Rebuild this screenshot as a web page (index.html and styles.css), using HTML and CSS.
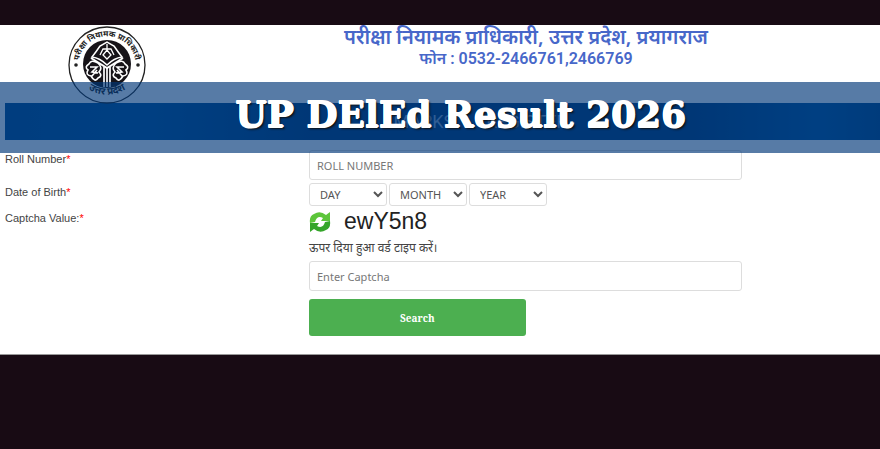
FILE: index.html
```html
<!DOCTYPE html>
<html lang="en">
<head>
    <meta charset="UTF-8">
    <meta name="viewport" content="width=device-width, initial-scale=1.0">
    <title>UP DElEd Result 2026</title>
    <link rel="stylesheet" href="styles.css">
</head>
<body>

    <div class="page">
        <header class="header">
            <svg class="logo" viewBox="0 0 80 80" aria-hidden="true">
                <defs>
                    <path id="topArc" d="M 13 49 A 28.500 28.500 0 1 1 67 49"/>
                    <path id="bottomArc" d="M 12 55 A 34 34 0 0 0 68 55"/>
                </defs>
                <circle cx="40" cy="40" r="38" fill="#fff" stroke="#222" stroke-width="1.300"/>
                <circle cx="40" cy="39" r="24" fill="#161318"/>
                <circle cx="9" cy="40" r="1.800" fill="#222"/>
                <circle cx="71" cy="40" r="1.800" fill="#222"/>
                <g fill="none" stroke="#fff">
                    <path d="M25 32 Q29 27 33 21 L40 17 L47 21 Q51 27 55 32 Q47 33 40 40 Q33 33 25 32 Z" stroke-width="1.500"/>
                    <path d="M33 30 L36 24 H44 L47 30 M36 30 L40 25 L44 30 L40 34 Z M40 19 V24" stroke-width="1.300"/>
                    <path d="M24 33 L40 43 L56 33" stroke-width="2"/>
                    <path d="M37 42 V62 M40 42 V62 M43 42 V62" stroke-width="1.700"/>
                    <path d="M31 38 Q24 34 22 39 Q17 42 21 45 Q18 50 24 51 Q28 58 31 53 Q36 51 32 47 Q36 43 31 38 M23 42 L30 42 L25 47 L31 48 M25 51 L30 45" stroke-width="1.600"/>
                    <path d="M49 38 Q56 34 58 39 Q63 42 59 45 Q62 50 56 51 Q52 58 49 53 Q44 51 48 47 Q44 43 49 38 M57 42 L50 42 L55 47 L49 48 M55 51 L50 45" stroke-width="1.600"/>
                </g>
                <text class="logo-text"><textPath href="#topArc" startOffset="50%">परीक्षा नियामक प्राधिकारी</textPath></text>
                <text class="logo-text logo-state"><textPath href="#bottomArc" startOffset="50%">उत्तर प्रदेश</textPath></text>
            </svg>
            <div class="office">
                <div>परीक्षा नियामक प्राधिकारी, उत्तर प्रदेश, प्रयागराज</div>
                <div class="phone">फोन : 0532-2466761,2466769</div>
            </div>
        </header>

        <div class="bar"><span>MARKS</span><span>REGISTER</span></div>

        <form class="form">
            <label for="roll">Roll Number<span>*</span></label>
            <input type="text" id="roll" placeholder="ROLL NUMBER">

            <label for="day">Date of Birth<span>*</span></label>
            <div class="dob">
                <select id="day"><option>DAY</option></select>
                <select aria-label="Month"><option>MONTH</option></select>
                <select aria-label="Year"><option>YEAR</option></select>
            </div>

            <label for="captcha">Captcha Value:<span>*</span></label>
            <div class="captcha">
                <div class="code">
                    <button type="button" class="refresh" aria-label="Refresh captcha">
                        <svg viewBox="0 0 22 22">
                            <path d="M1 12 Q0 5 5 3 Q11 -1 17 4 L21 1 V10 H12 L14 7 Q8 4 6 11 Z" fill="#5cc53a"/>
                            <path d="M21 10 Q22 17 17 19 Q11 23 5 18 L1 21 V12 H10 L8 15 Q14 18 16 11 Z" fill="#35a52a"/>
                        </svg>
                    </button>
                    <span>ewY5n8</span>
                </div>
                <p>ऊपर दिया हुआ वर्ड टाइप करें।</p>
                <input type="text" id="captcha" placeholder="Enter Captcha">
                <button type="submit" class="search">Search</button>
            </div>
        </form>

        <h1 class="banner">UP DElEd Result 2026</h1>
    </div>

</body>
</html>
```
FILE: styles.css
```css
* { box-sizing: border-box; }
body { margin: 0; padding-top: 25px; background: #180b14; font-family: "Liberation Sans", Arial, sans-serif; font-size: 11px; color: #444; }
.page { position: relative; background: white; padding-bottom: 18px; border-bottom: 1px solid #999; }

.header { display: flex; height: 78px; padding-left: 67px; }
.logo { width: 80px; height: 80px; flex: none; }
.logo-text { font: bold 8px "Noto Sans", sans-serif; fill: #222; text-anchor: middle; }
.logo-state { font-size: 10px; }
.office { flex: 1; padding-top: 1px; padding-left: 25px; text-align: center; color: #4767c9; font-family: "Noto Sans", "Noto Sans Devanagari", sans-serif; font-weight: 600; font-size: 20px; line-height: 22px; }
.phone { font-family: Roboto, "Noto Sans", sans-serif; font-size: 16px; }

.bar { display: flex; justify-content: center; gap: 32px; margin-left: 5px; height: 37px; padding-left: 76px; line-height: 37px; font-family: Roboto, sans-serif; font-size: 18px; color: #8ba6c9; background: linear-gradient(90deg, #004a8c, #005197 16%, #003872 36%, #003872 78%, #005197 93%, #004584); }

.form { display: grid; grid-template-columns: 304px 1fr; row-gap: 3px; padding: 10px 138px 0 5px; }
.form label { padding-top: 3px; line-height: 13px; }
.form label span { color: red; }
input, select { font-family: "Noto Sans", sans-serif; font-size: 11px; color: #555; background: white; border: 1px solid #ddd; border-radius: 3px; }
input { width: 100%; height: 30px; padding: 0 7px; }
input::placeholder { color: #777; }
.dob { display: flex; gap: 2px; }
select { width: 78px; height: 23px; padding: 0 2px 0 6px; }

.code { display: flex; align-items: center; gap: 13px; height: 25px; font-size: 23px; color: #222; }
.refresh { width: 22px; height: 22px; padding: 0; border: 0; background: none; }
.captcha p { margin: 5px 0; line-height: 17px; font-family: "Noto Sans", sans-serif; font-size: 12px; }
.search { display: block; width: 50%; height: 37px; margin-top: 8px; border: 0; border-radius: 3px; background: #4caf50; color: white; font-family: "Noto Serif", "DejaVu Serif", serif; font-weight: bold; font-size: 10px; }

.banner { position: absolute; top: 57px; left: 0; right: 0; height: 71px; margin: 0; padding-left: 41px; line-height: 64px; text-align: center; background: rgba(0, 55, 120, 0.66); color: white; font-family: "DejaVu Serif", serif; font-weight: bold; font-size: 36px; text-shadow: 1px 0 white, 0 1px white, 0 -1px white, 2px 2px 2px #111; }
```
